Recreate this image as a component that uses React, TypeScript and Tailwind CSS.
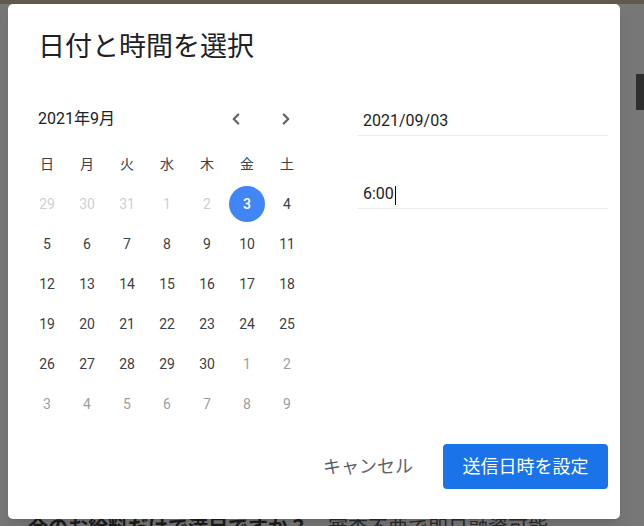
import { ChevronLeft, ChevronRight } from "lucide-react";

const font = { fontFamily: '"Roboto", "Noto Sans CJK JP", sans-serif' };

const weekdays = ["日", "月", "火", "水", "木", "金", "土"];

type Day = { n: number; kind: "past" | "cur" | "next" | "sel" };

const days: Day[] = [
  ...[29, 30, 31, 1, 2].map((n) => ({ n, kind: "past" as const })),
  { n: 3, kind: "sel" },
  ...Array.from({ length: 27 }, (_, i) => ({ n: i + 4, kind: "cur" as const })),
  ...[1, 2, 3, 4, 5, 6, 7, 8, 9].map((n) => ({ n, kind: "next" as const })),
];

function DayCell({ day }: { day: Day }) {
  if (day.kind === "sel") {
    return (
      <div className="flex h-10 w-10 items-center justify-center">
        <span className="flex h-[36px] w-[36px] items-center justify-center rounded-full bg-[#4285f4] text-[14px] font-medium text-white">
          {day.n}
        </span>
      </div>
    );
  }
  const color =
    day.kind === "past" ? "text-[#cfcfcf]" : day.kind === "next" ? "text-[#9e9e9e]" : "text-[#3c4043]";
  return <div className={`flex h-10 w-10 items-center justify-center text-[14px] ${color}`}>{day.n}</div>;
}

export default function App() {
  return (
    <div className="relative h-[526px] w-[644px] overflow-hidden bg-[#777777]" style={font}>
      {/* dimmed page behind the dialog */}
      <div className="h-1 bg-[#5f5a4b]" />
      <div className="flex justify-end">
        <div className="mt-[70px] h-[36px] w-[8px] bg-[#2e2e2e]" />
      </div>
      <div className="mt-[406px] flex items-baseline gap-5 pl-[28px] text-[20px] leading-[24px] whitespace-nowrap">
        <span className="font-bold text-[#1c1c1c]">今のお給料だけで満足ですか？</span>
        <span className="text-[#2a2a2a]">審査不要で即日融資可能</span>
      </div>

      {/* dialog */}
      <div className="absolute left-2 top-1 flex h-[515px] w-[612px] flex-col rounded-[5px] bg-white shadow-lg">
        <h1 className="pl-[30px] pt-[26px] text-[27px] leading-[34px] font-normal text-[#202124]">日付と時間を選択</h1>

        <div className="mt-[41px] flex">
          {/* calendar */}
          <div className="w-[320px] pl-[19px]">
            <div className="-mt-[4px] flex h-[36px] items-center">
              <span className="w-[181px] pl-[11px] text-[16px] text-[#202124]">2021年9月</span>
              <ChevronLeft className="ml-[19px] h-[18px] w-[18px] text-[#5f6368]" strokeWidth={3} />
              <ChevronRight className="ml-[32px] h-[18px] w-[18px] text-[#5f6368]" strokeWidth={3} />
            </div>
            <div className="mt-[7px] grid w-[280px] grid-cols-7">
              {weekdays.map((w) => (
                <div key={w} className="flex h-10 w-10 items-center justify-center text-[14px] text-[#3c4043]">
                  {w}
                </div>
              ))}
              {days.map((d, i) => (
                <DayCell key={i} day={d} />
              ))}
            </div>
          </div>

          {/* fields */}
          <div className="ml-[30px] flex w-[250px] flex-col pt-[1px]">
            <div className="flex h-[30px] items-end border-b border-[#e8eaed] pb-[2px] pl-[5px] text-[16px] text-[#202124]">
              2021/09/03
            </div>
            <div className="mt-[43px] flex h-[30px] items-end border-b border-[#e8eaed] pb-[2px] pl-[5px] text-[16px] text-[#202124]">
              6:00<span className="mb-[1px] ml-[1px] inline-block h-[19px] w-px bg-black" />
            </div>
          </div>
        </div>

        <div className="mt-auto mb-[30px] flex items-center justify-end gap-[30px] pr-[12px]">
          <button className="text-[18px] text-[#5f6368]">キャンセル</button>
          <button className="h-[45px] w-[165px] rounded-[4px] bg-[#1a73e8] text-[18px] text-white">送信日時を設定</button>
        </div>
      </div>
    </div>
  );
}
